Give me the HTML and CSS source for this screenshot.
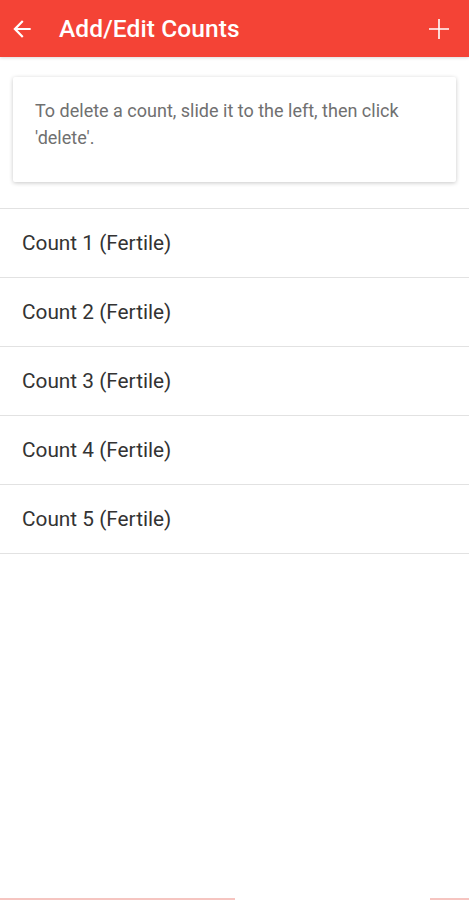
FILE: index.html
```html
<!DOCTYPE html>
<html>
<head>
<meta charset="utf-8">
<link rel="stylesheet" href="styles.css">
</head>
<body>
<header class="toolbar">
  <svg class="icon back" viewBox="0 0 24 24" width="26" height="26"><path d="M20 11H7.83l5.59-5.59L12 4l-8 8 8 8 1.41-1.41L7.83 13H20v-2z" fill="#fff"/></svg>
  <h1 class="title">Add/Edit Counts</h1>
  <svg class="icon add" viewBox="0 0 24 24" width="24" height="24"><path d="M12 2v20M2 12h20" stroke="#fff" stroke-width="1.6" fill="none"/></svg>
</header>
<main class="content">
  <div class="card">To delete a count, slide it to the left, then click 'delete'.</div>
  <ul class="list">
    <li class="item">Count 1 (Fertile)</li>
    <li class="item">Count 2 (Fertile)</li>
    <li class="item">Count 3 (Fertile)</li>
    <li class="item">Count 4 (Fertile)</li>
    <li class="item">Count 5 (Fertile)</li>
  </ul>
</main>
<div class="bottom">
  <span class="seg seg-left"></span>
  <span class="seg seg-right"></span>
</div>
</body>
</html>
```
FILE: styles.css
```css
* { box-sizing: border-box; }
html, body { margin: 0; padding: 0; }
body {
  width: 469px;
  height: 900px;
  background: #fff;
  font-family: Roboto, "Liberation Sans", sans-serif;
  position: relative;
  overflow: hidden;
}
.toolbar {
  height: 57px;
  background: #f44336;
  display: flex;
  align-items: center;
  padding: 0 18px 0 9px;
  box-shadow: 0 1px 3px rgba(0,0,0,0.15);
}
.icon { flex: none; display: block; }
.title {
  margin: 0 0 0 24px;
  flex: 1;
  color: #fff;
  font-size: 24.5px;
  font-weight: 500;
  letter-spacing: 0.1px;
}
.content { padding-top: 20px; }
.card {
  margin: 0 13px;
  height: 105px;
  padding: 20px 30px 0 22px;
  font-size: 18px;
  line-height: 27px;
  color: #707070;
  background: #fff;
  box-shadow: 0 1px 4px rgba(0,0,0,0.22);
  border-radius: 2px;
}
.list {
  list-style: none;
  margin: 26px 0 0 0;
  padding: 0;
  border-top: 1px solid #e2e2e2;
}
.item {
  height: 69px;
  display: flex;
  align-items: center;
  padding-left: 22px;
  font-size: 20.8px;
  color: #333;
  border-bottom: 1px solid #e2e2e2;
}
.bottom {
  position: absolute;
  left: 0;
  right: 0;
  bottom: 0;
  height: 2px;
}
.seg {
  position: absolute;
  top: 0;
  height: 2px;
  background: #f6c4c0;
}
.seg-left { left: 0; width: 235px; }
.seg-right { left: 430px; right: 0; }
```
